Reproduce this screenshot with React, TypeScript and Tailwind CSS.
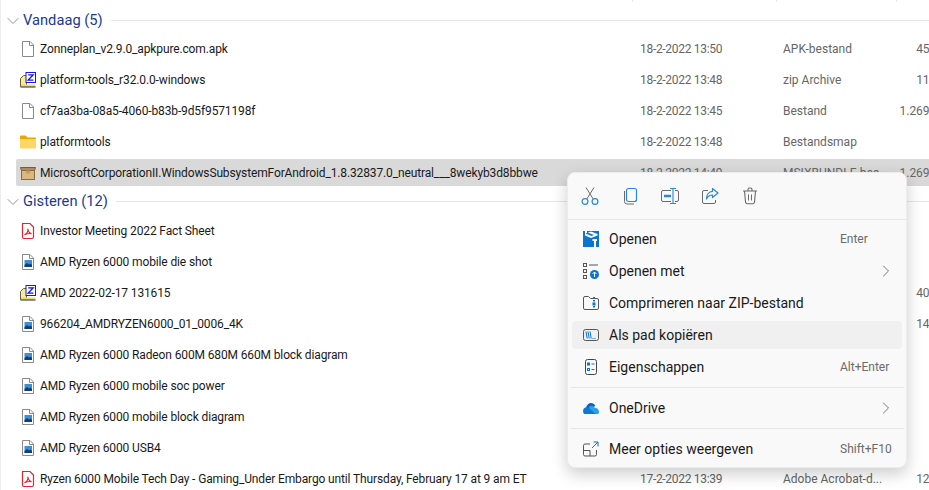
import { ChevronDown, ChevronRight } from 'lucide-react';
import type { ReactNode } from 'react';

const FileIcon = () => (
  <svg width="16" height="18" viewBox="0 0 16 18" fill="none">
    <path d="M2.500 1.500h7.500l3.500 3.500v11.500h-11z" fill="#fff" stroke="#8a8a8a" />
    <path d="M9.500 1.500v4h4" stroke="#8a8a8a" />
  </svg>
);

const ImageFileIcon = () => (
  <svg width="16" height="18" viewBox="0 0 16 18" fill="none">
    <path d="M2.500 1.500h7.500l3.500 3.500v11.500h-11z" fill="#fff" stroke="#8a8a8a" />
    <path d="M9.500 1.500v4h4" stroke="#8a8a8a" />
    <rect x="4.500" y="7" width="7.500" height="7" fill="#3f8fd6" />
    <path d="M4.500 14v-2l2.500-2 2 1.500 1.500-1 1.500 1.500v2z" fill="#123f78" />
  </svg>
);

const PdfIcon = () => (
  <svg width="16" height="18" viewBox="0 0 16 18" fill="none">
    <path d="M2.500 1.500h7.500l3.500 3.500v10a1.500 1.500 0 0 1-1.500 1.500h-8a1.500 1.500 0 0 1-1.500-1.500z" fill="#fff" stroke="#e3242b" strokeWidth="1.200" />
    <path d="M4.500 12.800c2-.8 3.600-3.200 3.400-6 .3 2.600 1.400 4.400 3.600 4.800-2.400-.3-5 .2-7 1.200z" stroke="#e3242b" strokeWidth="1.100" />
  </svg>
);

const ZipIcon = () => (
  <svg width="16" height="16" viewBox="0 0 16 16" fill="none">
    <path d="M.5 6.500l3-3h3v11h-6z" fill="#f5eb9a" stroke="#6d6330" />
    <rect x="1" y="12.500" width="14.500" height="2.500" fill="#e8dc7e" />
    <path d="M.5 15h15" stroke="#2b2b10" />
    <rect x="6" y=".5" width="9.500" height="10" fill="#fff" stroke="#1717e8" />
    <path d="M8.200 2.800h5l-5 5.300h5.200" stroke="#1717e8" strokeWidth="1.300" />
  </svg>
);

const FolderIcon = () => (
  <svg width="16" height="14" viewBox="0 0 16 14" fill="none">
    <path d="M0 1.500A1 1 0 0 1 1 .5h4.500l2 2H15a1 1 0 0 1 1 1V5H0z" fill="#e9a800" />
    <path d="M0 4h16v8.500a1 1 0 0 1-1 1H1a1 1 0 0 1-1-1z" fill="#fcd768" />
  </svg>
);

const BoxIcon = () => (
  <svg width="16" height="14" viewBox="0 0 16 14" fill="none">
    <path d="M.5 1.500h15l-1 3h-13z" fill="#b08a5a" stroke="#7b5a36" />
    <rect x="1.500" y="4.500" width="13" height="9" fill="#dcb77e" stroke="#8c6a42" />
    <path d="M6 4.500h4v3H6z" fill="#c49a62" />
  </svg>
);

const Scissors = () => (
  <svg width="20" height="20" viewBox="0 0 20 20" fill="none">
    <path d="M6.800 13L14 1.500M13.200 13L6 1.500" stroke="#6b6b6b" />
    <circle cx="5" cy="15.500" r="2.900" stroke="#2b88d8" strokeWidth="1.200" />
    <circle cx="15" cy="15.500" r="2.900" stroke="#2b88d8" strokeWidth="1.200" />
  </svg>
);

const Copy = () => (
  <svg width="20" height="20" viewBox="0 0 20 20" fill="none">
    <rect x="6.500" y="2.500" width="10" height="13" rx="2" stroke="#2b88d8" strokeWidth="1.200" />
    <path d="M4.500 5v10.500a2.500 2.500 0 0 0 2.500 2.500h7" stroke="#6b6b6b" />
  </svg>
);

const Rename = () => (
  <svg width="20" height="20" viewBox="0 0 20 20" fill="none">
    <path d="M11 4.500H3a1.500 1.500 0 0 0-1.500 1.500v8A1.500 1.500 0 0 0 3 15.500h8M15 4.500h2A1.500 1.500 0 0 1 18.500 6v8a1.500 1.500 0 0 1-1.500 1.500h-2" stroke="#6b6b6b" />
    <path d="M4 10h7" stroke="#2b88d8" strokeWidth="2.500" />
    <path d="M10 2.500h6M10 17.500h6M13 2.500v15" stroke="#2b88d8" strokeWidth="1.100" />
  </svg>
);

const Share = () => (
  <svg width="20" height="20" viewBox="0 0 20 20" fill="none">
    <path d="M8 4.500H4A1.500 1.500 0 0 0 2.500 6v10A1.500 1.500 0 0 0 4 17.500h10a1.500 1.500 0 0 0 1.500-1.500v-2" stroke="#6b6b6b" />
    <path d="M12.500 2.500l5.500 4.500-5.500 4.500V9C10 9 8 10 6.500 13c0-4.500 2.500-7.500 6-7.700z" stroke="#2b88d8" strokeWidth="1.200" strokeLinejoin="round" />
  </svg>
);

const Trash = () => (
  <svg width="20" height="20" viewBox="0 0 20 20" fill="none">
    <path d="M3 5h14M8 5V3.500A1.500 1.500 0 0 1 9.500 2h1A1.500 1.500 0 0 1 12 3.500V5" stroke="#6b6b6b" strokeWidth="1.100" />
    <path d="M4.500 5l1 11a2 2 0 0 0 2 1.800h5a2 2 0 0 0 2-1.800l1-11" stroke="#6b6b6b" strokeWidth="1.100" />
    <path d="M8.500 8.500v6M11.500 8.500v6" stroke="#6b6b6b" />
  </svg>
);

const OpenBox = () => (
  <svg width="16" height="16" viewBox="0 0 16 16" fill="none">
    <rect width="16" height="16" fill="#0a74d1" />
    <path d="M2 0h2v2l4-1.500L14.500 3v1.500L8 7 2 4.500z" fill="#fff" />
    <path d="M9.500 8H14v2h-1v6h-2v-6H9.500z" fill="#fff" />
    <path d="M4.500 1.500L11 4 8.500 5 2.500 2.500z" fill="#0a74d1" />
  </svg>
);

const OpenWith = () => (
  <svg width="16" height="16" viewBox="0 0 16 16" fill="none">
    <rect x=".5" y=".5" width="3" height="3" stroke="#555" />
    <rect x=".5" y="6.500" width="3" height="3" stroke="#555" />
    <rect x=".5" y="12.500" width="3" height="3" stroke="#555" />
    <path d="M6 2h9" stroke="#555" />
    <circle cx="11.500" cy="11.500" r="4.500" fill="#0a74d1" />
    <path d="M11.500 14V9M9.500 11l2-2 2 2" stroke="#fff" />
  </svg>
);

const ZipFolder = () => (
  <svg width="16" height="14" viewBox="0 0 16 14" fill="none">
    <path d="M.5 2A1.500 1.500 0 0 1 2 .5h3.500l2 2H14A1.500 1.500 0 0 1 15.500 4v8A1.500 1.500 0 0 1 14 13.500H2A1.500 1.500 0 0 1 .5 12z" stroke="#555" />
    <path d="M11 1v12" stroke="#0a74d1" strokeWidth="2" strokeDasharray="1.500 1.500" />
    <rect x="9.500" y="6.500" width="3" height="3" fill="#0a74d1" />
  </svg>
);

const PathIcon = () => (
  <svg width="16" height="12" viewBox="0 0 16 12" fill="none">
    <rect x=".5" y=".5" width="15" height="11" rx="2" stroke="#555" />
    <path d="M3 2.500l1.200 7M5 2.500l1.200 7M7 2.500l1.200 7" stroke="#0a74d1" />
    <path d="M9.500 9.500h1M11.500 9.500h1" stroke="#0a74d1" />
  </svg>
);

const Properties = () => (
  <svg width="12" height="16" viewBox="0 0 12 16" fill="none">
    <rect x=".5" y=".5" width="11" height="15" rx="2" stroke="#444" />
    <rect x="2.500" y="4" width="2" height="2" stroke="#0a74d1" />
    <rect x="2.500" y="9.500" width="2" height="2" stroke="#0a74d1" />
    <path d="M6.500 5h3M6.500 10.500h3" stroke="#0a74d1" />
  </svg>
);

const OneDrive = () => (
  <svg width="16" height="11" viewBox="0 0 16 11" fill="none">
    <path d="M3 5C3.500 2 5.500 0 8 0c1.800 0 3.300 1 4.200 2.800L8 7z" fill="#0a64b8" />
    <path d="M6 3.500c1-.6 2-.9 3-.7 1.200.2 2.300 1 2.900 2.300C14 4.800 16 6.500 16 8.800c0 .8-.3 1.600-.7 2.200H7z" fill="#2aa0e6" />
    <path d="M3 4.200C1.300 4.400 0 6 0 8c0 1.100.4 2.200 1 3h11.500L7 6C5.800 4.700 4.500 4.100 3 4.200z" fill="#0f78d4" />
  </svg>
);

const MoreOptions = () => (
  <svg width="16" height="16" viewBox="0 0 16 16" fill="none">
    <path d="M7 3H2A1.500 1.500 0 0 0 .5 4.500v9A1.500 1.500 0 0 0 2 15h10a1.500 1.500 0 0 0 1.500-1.500V9" stroke="#555" />
    <path d="M.5 9.500h6.500V15" stroke="#555" />
    <path d="M9 7l6-6M10.500 1h4.500v4.500" stroke="#0a74d1" />
  </svg>
);

type Row = {
  icon: ReactNode;
  name: string;
  date?: string;
  kind?: string;
  size?: string;
  selected?: boolean;
};

const today: Row[] = [
  { icon: <FileIcon />, name: 'Zonneplan_v2.9.0_apkpure.com.apk', date: '18-2-2022 13:50', kind: 'APK-bestand', size: '45.120 KB' },
  { icon: <ZipIcon />, name: 'platform-tools_r32.0.0-windows', date: '18-2-2022 13:48', kind: 'zip Archive', size: '11.780 KB' },
  { icon: <FileIcon />, name: 'cf7aa3ba-08a5-4060-b83b-9d5f9571198f', date: '18-2-2022 13:45', kind: 'Bestand', size: '1.269.330 KB' },
  { icon: <FolderIcon />, name: 'platformtools', date: '18-2-2022 13:48', kind: 'Bestandsmap' },
  {
    icon: <BoxIcon />,
    name: 'MicrosoftCorporationII.WindowsSubsystemForAndroid_1.8.32837.0_neutral___8wekyb3d8bbwe',
    date: '18-2-2022 14:49',
    kind: 'MSIXBUNDLE-bes...',
    size: '1.269.330 KB',
    selected: true,
  },
];

const yesterday: Row[] = [
  { icon: <PdfIcon />, name: 'Investor Meeting 2022 Fact Sheet' },
  { icon: <ImageFileIcon />, name: 'AMD Ryzen 6000 mobile die shot' },
  { icon: <ZipIcon />, name: 'AMD 2022-02-17 131615', size: '40.210 KB' },
  { icon: <ImageFileIcon />, name: '966204_AMDRYZEN6000_01_0006_4K', size: '14.550 KB' },
  { icon: <ImageFileIcon />, name: 'AMD Ryzen 6000 Radeon 600M 680M 660M block diagram' },
  { icon: <ImageFileIcon />, name: 'AMD Ryzen 6000 mobile soc power' },
  { icon: <ImageFileIcon />, name: 'AMD Ryzen 6000 mobile block diagram' },
  { icon: <ImageFileIcon />, name: 'AMD Ryzen 6000 USB4' },
  {
    icon: <PdfIcon />,
    name: 'Ryzen 6000 Mobile Tech Day - Gaming_Under Embargo until Thursday, February 17 at 9 am ET',
    date: '17-2-2022 13:39',
    kind: 'Adobe Acrobat-d...',
    size: '12.400 KB',
  },
];

const GroupHeader = ({ title }: { title: string }) => (
  <div className="flex h-[27px] items-center pl-[2px]">
    <ChevronDown className="h-[20px] w-[20px] text-[#8a8a8a]" strokeWidth={1.1} />
    <span className="text-[14.7px] leading-none text-[#1a3a94]">{title}</span>
    <div className="ml-[8px] h-px flex-1 bg-[#e5e5e5]" />
  </div>
);

const FileRow = ({ row }: { row: Row }) => (
  <div className={`flex h-[27px] shrink-0 items-center rounded-l-[2px] pl-[4px] text-[12px] whitespace-nowrap ${row.selected ? 'bg-[#d9d9d9]' : ''}`}>
    <div className="flex w-[16px] justify-center">{row.icon}</div>
    <div className="ml-[4px] w-[600px] shrink-0 truncate tracking-[-0.13px] text-[#1a1a1a]">{row.name}</div>
    <div className="w-[143px] shrink-0 tracking-[-0.3px] text-[#666]">{row.date}</div>
    <div className="w-[100px] shrink-0 text-[#666]">{row.kind}</div>
    <div className="w-[88px] shrink-0 text-right text-[#666]">{row.size}</div>
  </div>
);

const MenuItem = ({ icon, label, shortcut, arrow, active }: { icon: ReactNode; label: string; shortcut?: string; arrow?: boolean; active?: boolean }) => (
  <div className={`flex h-[28px] items-center rounded-[4px] ${active ? 'bg-[#f0f0f0]' : ''}`}>
    <div className="flex w-[37px] shrink-0 justify-center">{icon}</div>
    <span className="text-[14px] text-[#1a1a1a]">{label}</span>
    {shortcut && <span className="ml-auto w-[62px] text-[12px] text-[#6b6b6b]">{shortcut}</span>}
    {arrow && <ChevronRight className="mr-[6px] ml-auto h-[20px] w-[20px] text-[#6b6b6b]" strokeWidth={1.1} />}
  </div>
);

const ContextMenu = () => (
  <div className="absolute top-[172px] left-[566px] w-[340px] rounded-[8px] border border-[#ececec] bg-[#f9f9f9] pb-[4px] shadow-[0_6px_16px_rgba(0,0,0,0.2)]">
    <div className="flex h-[47px] items-center border-b border-[#e6e6e6] pl-[2px]">
      {[<Scissors />, <Copy />, <Rename />, <Share />, <Trash />].map((icon, i) => (
        <div key={i} className="flex w-[40px] justify-center">{icon}</div>
      ))}
    </div>
    <div className="flex flex-col gap-[4px] px-[4px] pt-[5px]">
      <MenuItem icon={<OpenBox />} label="Openen" shortcut="Enter" />
      <MenuItem icon={<OpenWith />} label="Openen met" arrow />
      <MenuItem icon={<ZipFolder />} label="Comprimeren naar ZIP-bestand" />
      <MenuItem icon={<PathIcon />} label="Als pad kopiëren" active />
      <MenuItem icon={<Properties />} label="Eigenschappen" shortcut="Alt+Enter" />
    </div>
    <div className="mx-[2px] mt-[6px] h-px bg-[#e6e6e6]" />
    <div className="px-[4px] pt-[6px]">
      <MenuItem icon={<OneDrive />} label="OneDrive" arrow />
    </div>
    <div className="mx-[2px] mt-[6px] h-px bg-[#e6e6e6]" />
    <div className="px-[4px] pt-[6px]">
      <MenuItem icon={<MoreOptions />} label="Meer opties weergeven" shortcut="Shift+F10" />
    </div>
  </div>
);

export default function App() {
  return (
    <div className="relative h-[490px] w-[929px] overflow-hidden border-l border-[#eeeeee] bg-white font-['Roboto',sans-serif]">
      <div className="flex h-[2px] pl-[631px]">
        <div className="w-px bg-[#e5e5e5]" />
        <div className="ml-[143px] w-px bg-[#e5e5e5]" />
        <div className="ml-[119px] w-px bg-[#e5e5e5]" />
      </div>
      <div className="pt-[5px]">
        <GroupHeader title="Vandaag (5)" />
        <div className="mt-px flex flex-col gap-[4px] pl-[15px]">
          {today.map((row) => <FileRow key={row.name} row={row} />)}
        </div>
        <div className="mt-[2px]">
          <GroupHeader title="Gisteren (12)" />
        </div>
        <div className="mt-[2px] flex flex-col gap-[4px] pl-[15px]">
          {yesterday.map((row) => <FileRow key={row.name} row={row} />)}
        </div>
      </div>
      <ContextMenu />
    </div>
  );
}
